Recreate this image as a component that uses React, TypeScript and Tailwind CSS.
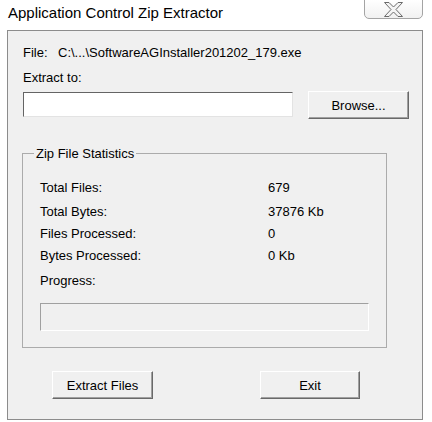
import React from 'react';

const stats = [
  { label: 'Total Files:', value: '679', h: 'h-[24px]' },
  { label: 'Total Bytes:', value: '37876 Kb', h: 'h-[22px]' },
  { label: 'Files Processed:', value: '0', h: 'h-[22px]' },
  { label: 'Bytes Processed:', value: '0 Kb', h: 'h-[22px]' },
];

const btn =
  'flex items-center justify-center bg-[#f0f0f0] border border-t-white border-l-white border-r-[#696969] border-b-[#696969] shadow-[inset_-1px_-1px_0_#a0a0a0] leading-[15px] text-black';

const App = () => {
  return (
    <div className="w-[432px] h-[422px] overflow-hidden bg-white font-['Liberation_Sans',Arial,sans-serif] text-[13px] leading-[15px] text-black">
      {/* barre de titre */}
      <div className="relative h-[30px]">
        <div className="pl-[8px] pt-[4px] text-[15px] leading-[18px]">Application Control Zip Extractor</div>
        <div className="absolute left-[364px] top-[-1px] w-[59px] h-[20px] border border-[#a4a4a4] rounded-b-[5px] bg-gradient-to-b from-white to-[#f1f1f1] flex items-center justify-center">
          <svg width="19" height="15" viewBox="0 0 19 15">
            <polygon
              points="0.5,0.5 5,0.5 9.5,5 14,0.5 18.5,0.5 12,7.5 18.5,14.5 14,14.5 9.5,10 5,14.5 0.5,14.5 7,7.5"
              fill="#f4f4f4"
              stroke="#6a6a6a"
              strokeWidth="1"
              strokeLinejoin="round"
            />
          </svg>
        </div>
      </div>

      {/* panneau principal */}
      <div className="ml-[7px] w-[416px] h-[390px] border border-[#8c8c8c] bg-[#f0f0f0] flex flex-col">
        <div className="ml-[15px] mt-[14px] flex">
          <span className="w-[35px]">File:</span>
          <span>C:\...\SoftwareAGInstaller201202_179.exe</span>
        </div>
        <div className="ml-[15px] mt-[10px]">Extract to:</div>

        <div className="ml-[15px] mt-[6px] flex items-start">
          <input
            type="text"
            className="mt-[1px] w-[270px] h-[25px] bg-white border border-t-[#646464] border-l-[#646464] border-r-[#e3e3e3] border-b-[#e3e3e3] outline-none px-[3px]"
          />
          <button className={`${btn} ml-[15px] w-[101px] h-[28px]`}>Browse...</button>
        </div>

        {/* Statistiques */}
        <fieldset className="ml-[14px] mt-[27px] w-[365px] border border-[#ababab]">
          <legend className="ml-[11px] px-[2px] leading-[15px]">Zip File Statistics</legend>
          <div className="px-[17px] pt-[19px] pb-[16px]">
            {stats.map((s) => (
              <div key={s.label} className={`grid grid-cols-[228px_1fr] ${s.h}`}>
                <span>{s.label}</span>
                <span>{s.value}</span>
              </div>
            ))}
            <div className="mt-[3px]">Progress:</div>
            <div className="mt-[15px] h-[28px] bg-[#f0f0f0] border border-t-[#a0a0a0] border-l-[#a0a0a0] border-r-white border-b-white"></div>
          </div>
        </fieldset>

        <div className="ml-[44px] mt-[23px] flex">
          <button className={`${btn} w-[101px] h-[28px]`}>Extract Files</button>
          <button className={`${btn} ml-[107px] w-[100px] h-[28px]`}>Exit</button>
        </div>
      </div>
    </div>
  );
};

export default App;
